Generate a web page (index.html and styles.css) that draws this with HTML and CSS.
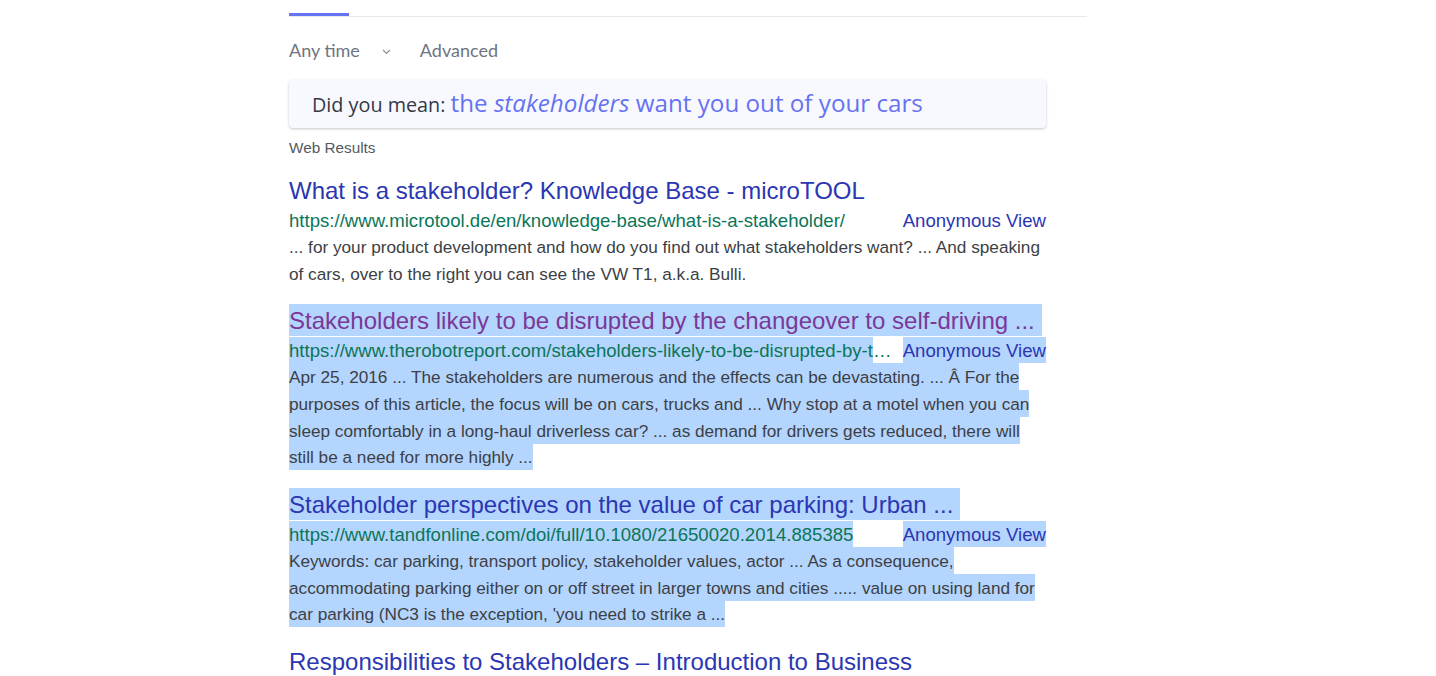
FILE: index.html
```html
<!DOCTYPE html>
<html lang="en">
<head>
<meta charset="utf-8">
<title>Search results</title>
<link rel="stylesheet" href="styles.css">
</head>
<body>
<main class="page">
  <nav class="tabs">
    <a class="tab active">All</a>
    <a class="tab">Images</a>
    <a class="tab">Videos</a>
    <a class="tab">News</a>
  </nav>

  <div class="filters">
    <span class="filter">Any time</span>
    <svg class="chevron" width="9" height="6" viewBox="0 0 9 6"><path d="M1 1l3.5 3.5L8 1" fill="none" stroke="#8a8f9c" stroke-width="1.2"/></svg>
    <span class="filter advanced">Advanced</span>
  </div>

  <div class="didyoumean">
    <span class="dym-label">Did you mean:</span>
    <a class="dym-link">the <em>stakeholders</em> want you out of your cars</a>
  </div>

  <div class="section-label">Web Results</div>

  <section class="result">
    <a class="title">What is a stakeholder? Knowledge Base - microTOOL</a>
    <div class="urlrow">
      <span class="url">https://www.microtool.de/en/knowledge-base/what-is-a-stakeholder/</span>
      <a class="anon">Anonymous View</a>
    </div>
    <p class="snippet">... for your product development and how do you find out what stakeholders want? ... And speaking of cars, over to the right you can see the VW T1, a.k.a. Bulli.</p>
  </section>

  <section class="result">
    <a class="title visited"><span class="hl">Stakeholders likely to be disrupted by the changeover to self-driving ...</span></a>
    <div class="urlrow">
      <span class="url"><span class="hl">https://www.therobotreport.com/stakeholders-likely-to-be-disrupted-by-t</span>…</span>
      <a class="anon"><span class="hl">Anonymous View</span></a>
    </div>
    <p class="snippet"><span class="hl">Apr 25, 2016 ... The stakeholders are numerous and the effects can be devastating. ... Â For the purposes of this article, the focus will be on cars, trucks and ... Why stop at a motel when you can sleep comfortably in a long-haul driverless car? ... as demand for drivers gets reduced, there will still be a need for more highly ...</span></p>
  </section>

  <section class="result">
    <a class="title"><span class="hl">Stakeholder perspectives on the value of car parking: Urban ...</span></a>
    <div class="urlrow">
      <span class="url"><span class="hl">https://www.tandfonline.com/doi/full/10.1080/21650020.2014.885385</span></span>
      <a class="anon"><span class="hl">Anonymous View</span></a>
    </div>
    <p class="snippet"><span class="hl">Keywords: car parking, transport policy, stakeholder values, actor ... As a consequence, accommodating parking either on or off street in larger towns and cities ..... value on using land for car parking (NC3 is the exception, 'you need to strike a ...</span></p>
  </section>

  <section class="result">
    <a class="title">Responsibilities to Stakeholders – Introduction to Business</a>
  </section>
</main>
</body>
</html>
```

FILE: styles.css
```css
html, body {
  margin: 0;
  padding: 0;
  background: #ffffff;
  overflow: hidden;
}

.page {
  padding-left: 289px;
  width: 798px;
}

/* tabs (scrolled mostly out of view) */
.tabs {
  display: flex;
  gap: 28px;
  margin-top: -19px;
  border-bottom: 1px solid #e6e8ef;
  font-family: Lato, "Open Sans", sans-serif;
  font-size: 17px;
  line-height: 20px;
  color: #6c727f;
}

.tab {
  padding: 0 20px 12px;
  border-bottom: 3px solid transparent;
}

.tab.active {
  border-bottom-color: #6573f5;
}

/* filter row */
.filters {
  display: flex;
  align-items: center;
  margin-top: 21px;
  height: 24px;
  font-family: Lato, "Open Sans", sans-serif;
  font-size: 18px;
  color: #6f7482;
}

.chevron {
  margin-left: 22px;
  margin-top: 3px;
}

.advanced {
  margin-left: 29px;
}

/* did you mean */
.didyoumean {
  margin-top: 18px;
  width: 757px;
  box-sizing: border-box;
  height: 48px;
  padding: 0 23px;
  background: #f8f9fe;
  border-radius: 4px;
  box-shadow: 0 1px 3px rgba(0, 0, 0, 0.22);
  font-family: "Open Sans", Lato, sans-serif;
  line-height: 46px;
  white-space: nowrap;
}

.dym-label {
  font-size: 19.8px;
  color: #333845;
}

.dym-link {
  font-size: 24.2px;
  color: #6672f0;
  margin-left: 1px;
}

.dym-link em {
  font-style: italic;
}

.section-label {
  margin-top: 10px;
  font-family: "Liberation Sans", Arial, sans-serif;
  font-size: 15.3px;
  line-height: 20px;
  color: #555a60;
}

/* results */
.result {
  width: 757px;
  margin-top: 17px;
  font-family: "Liberation Sans", Arial, sans-serif;
}

.result + .result {
  margin-top: 18px;
}

.title {
  display: block;
  font-size: 24px;
  line-height: 32px;
  color: #2b36b3;
  white-space: nowrap;
}

.title.visited {
  color: #7b3898;
}

.urlrow {
  display: flex;
  justify-content: space-between;
  margin-top: 1px;
  font-size: 18.6px;
  line-height: 26px;
  white-space: nowrap;
}

.url {
  color: #0b7658;
}

.anon {
  color: #2b36b3;
}

.snippet {
  margin: 0;
  font-size: 17.2px;
  line-height: 26.67px;
  color: #3c3f45;
}

.hl {
  background: #b4d5fe;
}

.title .hl {
  padding: 3px 7px 2px 0;
}

.urlrow .hl {
  padding: 3px 0 2px;
}

.snippet .hl {
  padding: 4px 0 3px;
}
```
